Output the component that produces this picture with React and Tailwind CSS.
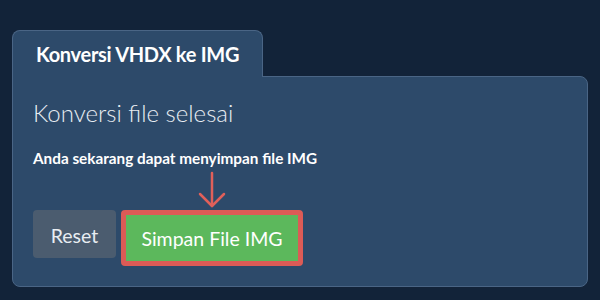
export default function App() {
  return (
    <div
      className="w-[600px] h-[300px] bg-[#122339] pt-[30px] px-[12px]"
      style={{ fontFamily: "Lato, 'Open Sans', sans-serif" }}
    >
      {/* Tab */}
      <div className="relative z-10 -mb-px w-[251px] h-[47px] bg-[#2d4a6a] border border-b-0 border-[#4a6585] rounded-t-lg pl-[23px] flex items-center">
        <span className="text-white font-bold text-[20px] leading-none tracking-[-0.3px]">Konversi VHDX ke IMG</span>
      </div>

      {/* Panel */}
      <div className="h-[211px] bg-[#2d4a6a] border border-[#4a6585] rounded-b-lg rounded-tr-lg px-[20px] pt-[19px]">
        <h2 className="text-[#e8edf2] font-light text-[24px] leading-[34px]">Konversi file selesai</h2>
        <p className="mt-[18px] text-white font-bold text-[15.3px] leading-[20px]">Anda sekarang dapat menyimpan file IMG</p>

        <div className="flex items-start gap-[5px] mt-[3px]">
          <div className="w-[83px]" />
          <div className="w-[182px] flex justify-center">
            <svg width="30" height="38" viewBox="0 0 30 38" fill="none" stroke="#e0605a" strokeWidth="2.5" strokeLinecap="round" strokeLinejoin="round">
              <path d="M15 2 V35" />
              <path d="M3 23 L15 35 L27 23" />
            </svg>
          </div>
        </div>

        <div className="flex items-start gap-[5px] mt-[1px]">
          <button className="w-[83px] h-[48px] pt-[3px] bg-[#4b5c6f] rounded-[4px] text-[#e8edf2] text-[19.5px]">Reset</button>
          <button className="w-[182px] h-[56px] pt-[2px] bg-[#5cb85c] border-[5px] border-[#dc5b56] rounded-[4px] text-white text-[19.5px]">Simpan File IMG</button>
        </div>
      </div>
    </div>
  );
}
